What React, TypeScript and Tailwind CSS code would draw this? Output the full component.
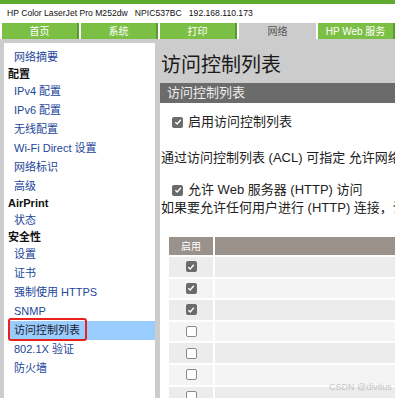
const navItems: { label: string; head?: boolean; active?: boolean }[] = [
  { label: '网络摘要' },
  { label: '配置', head: true },
  { label: 'IPv4 配置' },
  { label: 'IPv6 配置' },
  { label: '无线配置' },
  { label: 'Wi-Fi Direct 设置' },
  { label: '网络标识' },
  { label: '高级' },
  { label: 'AirPrint', head: true },
  { label: '状态' },
  { label: '安全性', head: true },
  { label: '设置' },
  { label: '证书' },
  { label: '强制使用 HTTPS' },
  { label: 'SNMP' },
  { label: '访问控制列表', active: true },
  { label: '802.1X 验证' },
  { label: '防火墙' },
];

const tabs = [
  { label: '首页' },
  { label: '系统' },
  { label: '打印' },
  { label: '网络', active: true },
  { label: 'HP Web 服务' },
];

const rows = [true, true, true, false, false, false, false];

function Box({ checked }: { checked: boolean }) {
  if (!checked)
    return <span className="block w-[11px] h-[11px] rounded-[2px] border border-[#8a8a8a] bg-white" />;
  return (
    <span className="flex items-center justify-center w-[11px] h-[11px] rounded-[2px] bg-[#6b6b6b]">
      <svg width="8" height="8" viewBox="0 0 8 8">
        <path d="M1.3 4.2 L3.2 6 L6.8 1.8" fill="none" stroke="white" strokeWidth="1.4" />
      </svg>
    </span>
  );
}

export default function App() {
  return (
    <div
      className="relative w-[395px] h-[398px] overflow-hidden bg-[#cccccc] flex flex-col"
      style={{ fontFamily: '"Liberation Sans", "Noto Sans CJK SC", sans-serif' }}
    >
      <div className="h-[4px] bg-[#5eab2f]" />
      <div className="h-[19px] bg-white flex items-center pl-[7px] text-[8.6px] text-[#111] whitespace-pre">
        HP Color LaserJet Pro M252dw   NPIC537BC   192.168.110.173
      </div>
      <div className="h-[16px] bg-white flex gap-[2px] pl-[2px]">
        {tabs.map(t => (
          <div
            key={t.label}
            className={
              t.active
                ? 'w-[77px] bg-[#cccccc] text-[#555] text-[10px] flex items-center justify-center'
                : 'w-[77px] bg-[#7cbf45] border-r-2 border-[#5a9a32] text-white text-[10px] flex items-center justify-center'
            }
          >
            {t.label}
          </div>
        ))}
      </div>

      <div className="flex flex-1 pt-[4px] min-h-0">
        <div className="w-[151px] ml-[4px] bg-white pt-[5px] shrink-0">
          {navItems.map(n =>
            n.head ? (
              <div key={n.label} className="h-[15px] pl-[4px] flex items-center text-[11px] font-bold text-[#111]">
                {n.label}
              </div>
            ) : (
              <div
                key={n.label}
                className={
                  n.active
                    ? 'relative h-[19px] ml-[4px] pl-[6px] flex items-center text-[11px] text-[#1b1b2e] bg-[#99ccff]'
                    : 'h-[19px] ml-[4px] pl-[6px] flex items-center text-[11px] text-[#23469a]'
                }
              >
                {n.label}
                {n.active && (
                  <span className="absolute left-0 top-[-3px] w-[79px] h-[23px] rounded-[3px] border-2 border-[#e8221c]" />
                )}
              </div>
            )
          )}
        </div>

        <div className="flex-1 ml-[5px] flex flex-col min-w-0">
          <div className="h-[40px] pt-[8px] pl-[1px] text-[20px] leading-[28px] text-[#1a1a1a]">访问控制列表</div>
          <div className="h-[20px] bg-[#6b6b6b] pl-[7px] flex items-center text-[13px] text-[#eeeeee]">访问控制列表</div>
          <div className="flex-1 bg-white text-[13px] text-[#222] whitespace-nowrap overflow-hidden">
            <div className="mt-[10px] h-[18px] pl-[12px] flex items-center gap-[5px]">
              <Box checked />
              <span>启用访问控制列表</span>
            </div>
            <div className="mt-[18px] h-[18px] pl-[1px] flex items-center">
              通过访问控制列表 (ACL) 可指定 允许网络访问打印机的主机地址列表。
            </div>
            <div className="mt-[14px] h-[18px] pl-[12px] flex items-center gap-[5px]">
              <Box checked />
              <span>允许 Web 服务器 (HTTP) 访问</span>
            </div>
            <div className="h-[18px] pl-[1px] flex items-center">
              如果要允许任何用户进行 (HTTP) 连接，请选中此复选框。
            </div>
            <div className="mt-[20px] ml-[9px] grid grid-cols-[44px_1fr] gap-x-[2px] gap-y-[2px]">
              <div className="h-[18px] bg-[#9a918a] text-white text-[10px] flex items-center justify-center">启用</div>
              <div className="h-[18px] bg-[#9a918a]" />
              {rows.map((c, i) => (
                <>
                  <div
                    key={'a' + i}
                    className={
                      i % 2 === 0
                        ? 'h-[19.6px] bg-[#ececec] flex items-center justify-center'
                        : 'h-[19.6px] bg-[#f4f4f4] flex items-center justify-center'
                    }
                  >
                    <Box checked={c} />
                  </div>
                  <div key={'b' + i} className={i % 2 === 0 ? 'h-[19.6px] bg-[#ececec]' : 'h-[19.6px] bg-[#f4f4f4]'} />
                </>
              ))}
            </div>
          </div>
        </div>
      </div>

      <span className="absolute left-[329px] top-[381px] whitespace-nowrap text-[9px] text-[#c4c4c4]">CSDN @divitus</span>
    </div>
  );
}
